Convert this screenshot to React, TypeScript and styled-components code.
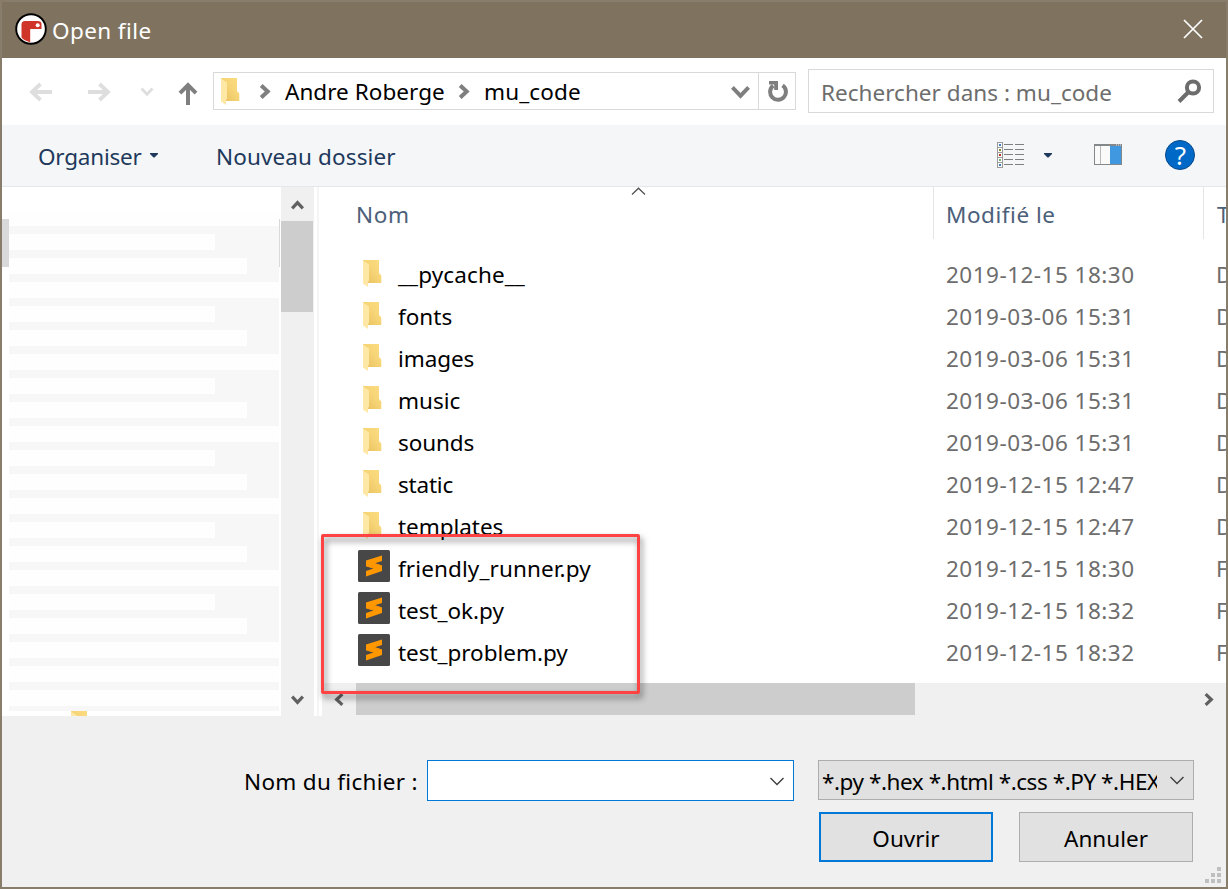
import React from 'react';
import styled, { createGlobalStyle } from 'styled-components';

const GlobalStyle = createGlobalStyle`
  * { box-sizing: border-box; }
  body { margin: 0; }
  svg { display: block; flex: none; }
`;

const Dialog = styled.main`
  position: relative;
  display: flex;
  flex-direction: column;
  width: 1228px;
  height: 889px;
  overflow: hidden;
  border: 2px solid #887d6a;
  background: #ffffff;
  color: #000000;
  font-family: 'Noto Sans', sans-serif;
  font-size: 22.5px;
  line-height: 30px;
  white-space: nowrap;
`;

const Text = styled.span<{ $spacing?: number }>`
  padding-top: 2px;
  letter-spacing: ${(p) => p.$spacing ?? 0}px;
`;

/* Title bar */
const TitleBar = styled.header`
  display: flex;
  align-items: center;
  flex: none;
  height: 56px;
  padding: 0 23px 2px 13px;
  background: #7f735f;
  color: #ffffff;
`;
const Title = styled.h1`
  flex: 1;
  margin: 0 0 0 5px;
  padding-top: 4px;
  font-size: inherit;
  font-weight: 400;
  letter-spacing: 0.4px;
`;
const CloseButton = styled.button`
  padding: 0;
  border: 0;
  background: none;
`;

/* Navigation row */
const NavBar = styled.nav`
  display: flex;
  align-items: center;
  flex: none;
  height: 67px;
  padding: 0 12px 1px 27px;
`;
const History = styled.div`
  display: flex;
  align-items: center;
  width: 184px;
  height: 28px;
  padding-top: 1px;
`;
const AddressBar = styled.div`
  display: flex;
  width: 583px;
  height: 38px;
  margin-right: 12px;
  border: 1px solid #d9d9d9;
`;
const Crumbs = styled.div`
  display: flex;
  align-items: center;
  flex: 1;
  padding: 0 8px 0 7px;
`;
const Crumb = styled(Text)<{ $width: number }>`
  width: ${(p) => p.$width}px;
  margin-left: 13px;
`;
const Refresh = styled.div`
  display: flex;
  align-items: center;
  justify-content: center;
  width: 37px;
  padding-left: 1px;
  border-left: 1px solid #d9d9d9;
`;
const SearchBox = styled.div`
  display: flex;
  align-items: center;
  justify-content: space-between;
  width: 406px;
  height: 44px;
  padding: 1px 11px 0 12px;
  border: 1px solid #d9d9d9;
  color: #6d6d6d;
`;

/* Command bar */
const CommandBar = styled.div`
  display: flex;
  align-items: center;
  flex: none;
  height: 62px;
  padding: 0 31px 0 36px;
  border-bottom: 1px solid #e5e7e9;
  background: #f4f6f8;
  color: #1e395b;
`;
const Command = styled.div<{ $width: number }>`
  display: flex;
  align-items: center;
  gap: 8px;
  width: ${(p) => p.$width}px;
`;
const ViewTools = styled.div`
  display: flex;
  align-items: center;
  margin-left: auto;
  padding-bottom: 1px;
`;
const ToolSlot = styled.div<{ $gap: number }>`
  margin-right: ${(p) => p.$gap}px;
`;

/* Body */
const Body = styled.div`
  display: flex;
  flex: none;
  height: 529px;
`;
const Sidebar = styled.aside`
  display: flex;
  width: 279px;
  overflow: hidden;
`;
const SelectionEdge = styled.div<{ $width: number }>`
  flex: none;
  width: ${(p) => p.$width}px;
  height: 48px;
  margin-top: 32px;
  background: #d9d9d9;
`;
const Places = styled.div`
  flex: none;
  width: 270px;
  height: 529px;
  padding-top: 23px;
  overflow: hidden;
`;
const PlacesTop = styled.div`
  height: 16px;
  background: #fefefe;
`;
const PlaceRow = styled.div`
  height: 24px;
  padding-top: 8px;
  background: #f7f7f7;
`;
const PlaceBar = styled.div<{ $width: number }>`
  width: ${(p) => p.$width}px;
  height: 16px;
  background: #fefefe;
`;
const PlacesEnd = styled.div`
  height: 5px;
  background: #f7f7f7;
`;
const PlaceFolder = styled.div`
  height: 5px;
  margin-left: 62px;
  overflow: hidden;
`;
const VScroll = styled.div`
  display: flex;
  flex-direction: column;
  align-items: center;
  width: 33px;
  background: #f0f0f0;
`;
const VThumb = styled.div`
  align-self: flex-start;
  width: 32px;
  height: 91px;
  background: #cdcdcd;
`;
const ScrollArrow = styled.div<{ $w: number; $h: number; $drop?: number }>`
  display: flex;
  align-items: center;
  justify-content: center;
  flex: none;
  width: ${(p) => p.$w}px;
  height: ${(p) => p.$h}px;
  padding-top: ${(p) => p.$drop ?? 0}px;
`;
const Spacer = styled.div`
  flex: 1;
`;
const Splitter = styled.div`
  width: 8px;
  border-left: 3px solid #ffffff;
  border-right: 3px solid #ffffff;
  background: #f5f5f5;
`;
const FilePane = styled.section`
  display: flex;
  flex-direction: column;
  flex: 1;
  min-width: 0;
  overflow: hidden;
`;
const HeaderRow = styled.div`
  display: flex;
  height: 52px;
  margin-bottom: 14px;
  color: #4c607a;
`;
const HeaderCell = styled.div<{ $width: number; $pad: number; $line?: boolean }>`
  position: relative;
  flex: none;
  width: ${(p) => p.$width}px;
  padding: 13px 0 0 ${(p) => p.$pad}px;
  border-left: ${(p) => (p.$line ? '1px solid #e5e5e5' : '0')};
`;
const SortMark = styled.div`
  position: absolute;
  top: 0;
  left: 309px;
`;
const FileRow = styled.div`
  display: flex;
  align-items: center;
  flex: none;
  height: 42px;
`;
const IconCell = styled.div`
  display: flex;
  flex: none;
  width: 76px;
  padding: 0 0 4px 36px;
`;
const FolderPad = styled.div`
  padding: 2px 0 0 5px;
`;
const NameCell = styled(Text)`
  flex: none;
  width: 548px;
`;
const DateCell = styled(Text)`
  flex: none;
  width: 270px;
  color: #6d6d6d;
`;
const KindCell = styled(Text)`
  flex: none;
  width: 20px;
  color: #6d6d6d;
`;
const HScroll = styled.div`
  display: flex;
  height: 33px;
  margin-top: auto;
  background: #f0f0f0;
`;
const HThumb = styled.div`
  width: 559px;
  height: 32px;
  background: #cdcdcd;
`;

/* Footer */
const Footer = styled.footer`
  display: flex;
  flex-direction: column;
  flex: 1;
  gap: 11px;
  padding: 44px 32px 0 0;
  background: #f0f0f0;
`;
const FieldRow = styled.div`
  display: flex;
  align-items: flex-start;
  justify-content: flex-end;
  height: 41px;
`;
const FieldLabel = styled.label`
  padding-top: 7px;
  width: 183px;
  letter-spacing: 0.3px;
`;
const FileNameBox = styled.div`
  display: flex;
  align-items: center;
  justify-content: flex-end;
  width: 367px;
  height: 41px;
  margin-right: 24px;
  padding: 0 9px 0 0;
  border: 1px solid #0078d7;
  background: #ffffff;
`;
const FilterBox = styled.div`
  display: flex;
  align-items: center;
  justify-content: space-between;
  width: 376px;
  height: 40px;
  padding: 0 9px 0 3px;
  border: 1px solid #adadad;
  background: #e1e1e1;
`;
const FilterText = styled.div`
  width: 335px;
  padding-top: 4px;
  overflow: hidden;
  letter-spacing: -0.44px;
`;
const ButtonRow = styled.div`
  display: flex;
  justify-content: flex-end;
  gap: 26px;
  padding-right: 1px;
`;
const Button = styled.button<{ $primary?: boolean }>`
  width: 174px;
  height: 50px;
  padding: 4px 0 0;
  border: ${(p) => (p.$primary ? '2px solid #0078d7' : '1px solid #adadad')};
  background: #e1e1e1;
  color: #000000;
  font: inherit;
`;
const Grip = styled.div`
  position: absolute;
  right: 5px;
  bottom: 4px;
`;
const Highlight = styled.div`
  position: absolute;
  left: 319px;
  top: 532px;
  width: 319px;
  height: 160px;
  border: 3px solid #ff4343;
  border-radius: 2px;
  filter: drop-shadow(2px 4px 3px rgba(0, 0, 0, 0.5));
`;

const AppLogo = () => (
  <svg width="32" height="32" viewBox="0 0 32 32">
    <circle cx="16" cy="16" r="15" fill="#ffffff" />
    <path d="M6.500 11.500 Q6.500 8 10 8 H22.500 Q26.500 8 26.500 11 V16 H15.200 V29.200 Q9 27.500 6.500 24.500 Z" fill="#cf3528" />
    <circle cx="22.700" cy="12.300" r="2" fill="#ffffff" />
    <circle cx="16" cy="16" r="14.800" fill="none" stroke="#000000" strokeWidth="1.900" />
  </svg>
);

const Folder = () => (
  <svg width="19" height="27" viewBox="0 0 19 27">
    <defs>
      <linearGradient id="folderBack" x1="0" y1="1" x2="1" y2="0">
        <stop offset="0" stopColor="#e8bf5c" />
        <stop offset="0.600" stopColor="#f7d679" />
        <stop offset="1" stopColor="#fbdc80" />
      </linearGradient>
    </defs>
    <path d="M0 0 H16 V13 L18.300 15.500 V23 H5 Z" fill="url(#folderBack)" />
    <path d="M0 0.500 L6 4.500 V20.500 L5 22 V27 L0 23.500 Z" fill="#ffe8a6" />
  </svg>
);

const ScriptIcon = () => (
  <svg width="32" height="32" viewBox="0 0 32 32">
    <rect width="32" height="32" rx="1.500" fill="#474747" />
    <path d="M8 10.500 L24 5.500 V11 L17 13.300 L24 15.600 V21 L8 26.500 V21 L15.500 18.500 L8 16.200 Z" fill="#ff9800" />
    <path d="M8 16.200 L15.500 18.500 L17.500 17.800 L11 15.500 Z M24 15.600 L17 13.300 L14.500 14 L20 16 Z" fill="#f89400" />
  </svg>
);

type Dir = 'up' | 'down' | 'left' | 'right';
const turn: Record<Dir, number> = { down: 0, left: 90, up: 180, right: 270 };

const Chevron = ({ dir, size, stroke, color }: { dir: Dir; size: number; stroke: number; color: string }) => (
  <svg width={size} height={size} viewBox={`0 0 ${size} ${size}`}>
    <path
      d={`M${stroke / 2.8} ${size * 0.28} L${size / 2} ${size * 0.78 - stroke / 4} L${size - stroke / 2.8} ${size * 0.28}`}
      fill="none"
      stroke={color}
      strokeWidth={stroke}
      transform={`rotate(${turn[dir]} ${size / 2} ${size / 2})`}
    />
  </svg>
);

const HistoryIcons = () => (
  <svg width="184" height="28" viewBox="29 78 184 28" fill="none">
    <path d="M52 92 H32 M40.500 84 L32 92 L40.500 100" stroke="#dedede" strokeWidth="3.800" />
    <path d="M88 92 H108 M99.500 84 L108 92 L99.500 100" stroke="#dedede" strokeWidth="3.800" />
    <path d="M141.500 88.500 L147 94.200 L152.500 88.500" stroke="#dedede" strokeWidth="2.800" />
    <path d="M188 105 V85 M180 93.200 L188 85 L196 93.200" stroke="#7f7f7f" strokeWidth="4" />
  </svg>
);

const RefreshIcon = () => (
  <svg width="20" height="23" viewBox="0 0 20 23">
    <path d="M5.200 5.600 A7.900 7.900 0 1 0 14.600 5.400" fill="none" stroke="#7f7f7f" strokeWidth="4" />
    <path d="M1 1 H10 V10 H6.200 V4.500 H1 Z" fill="#7f7f7f" />
  </svg>
);

const SearchIcon = () => (
  <svg width="25" height="25" viewBox="0 0 25 25" fill="none" stroke="#6d6d6d">
    <circle cx="16" cy="8.500" r="6.100" strokeWidth="4" />
    <path d="M11.500 13 L2 22.500" strokeWidth="4" />
  </svg>
);

const SmallTriangle = () => (
  <svg width="8" height="5" viewBox="0 0 8 5">
    <path d="M0 0 H8 V1 L4.500 4.500 H3.500 L0 1 Z" fill="#1e395b" />
  </svg>
);

const chips = ['#3a7fc4', '#7d8f2f', '#b8321f', '#7fae7a', '#3a7fc4'];
const ViewIcon = () => (
  <svg width="28" height="26" viewBox="0 0 28 26">
    {chips.map((c, i) => (
      <g key={i}>
        <rect x="0.500" y={0.5 + i * 5} width="5" height="5" fill="#ffffff" stroke="#9b9b9b" />
        <rect x="2" y={2 + i * 5} width="2" height="2" fill={c} />
        <path d={`M7 ${2.5 + i * 5} H16 M18 ${2.5 + i * 5} H27`} stroke="#808080" />
      </g>
    ))}
  </svg>
);

const PreviewIcon = () => (
  <svg width="28" height="22" viewBox="0 0 28 22">
    <rect x="0.500" y="0.500" width="27" height="20" fill="#fafafa" stroke="#85888b" />
    <rect x="0" y="0" width="28" height="2" fill="#85888b" />
    <path d="M6.500 2 V20" stroke="#b9b9b9" />
    <rect x="16" y="2" width="11.500" height="18" fill="#3f98e0" />
    <path d="M22 1 H23 M24 1 H25 M26 1 H27" stroke="#e8e8e8" />
    <path d="M27.500 2 V20" stroke="#85888b" />
  </svg>
);

const HelpBadge = styled.div`
  display: flex;
  align-items: center;
  justify-content: center;
  width: 30px;
  height: 30px;
  padding-left: 1px;
  border: 1px solid #0b4a8a;
  border-radius: 50%;
  background: #0069c8;
  color: #ffffff;
  font-size: 26px;
  line-height: 28px;
`;

const placeWidths = [206, 238, 270];
const places = Array.from({ length: 20 }, (_, i) => (i > 17 ? 270 : placeWidths[i % 3]));

interface Entry {
  name: string;
  date: string;
  kind: 'D' | 'F';
  spacing: number;
}
const entries: Entry[] = [
  { name: '__pycache__', date: '2019-12-15 18:30', kind: 'D', spacing: 0.12 },
  { name: 'fonts', date: '2019-03-06 15:31', kind: 'D', spacing: 0 },
  { name: 'images', date: '2019-03-06 15:31', kind: 'D', spacing: -0.1 },
  { name: 'music', date: '2019-03-06 15:31', kind: 'D', spacing: 0 },
  { name: 'sounds', date: '2019-03-06 15:31', kind: 'D', spacing: -0.1 },
  { name: 'static', date: '2019-12-15 12:47', kind: 'D', spacing: -0.2 },
  { name: 'templates', date: '2019-12-15 12:47', kind: 'D', spacing: -0.05 },
  { name: 'friendly_runner.py', date: '2019-12-15 18:30', kind: 'F', spacing: 0.11 },
  { name: 'test_ok.py', date: '2019-12-15 18:32', kind: 'F', spacing: -0.04 },
  { name: 'test_problem.py', date: '2019-12-15 18:32', kind: 'F', spacing: -0.04 },
];

export default function App() {
  return (
    <Dialog>
      <GlobalStyle />
      <TitleBar>
        <AppLogo />
        <Title>Open file</Title>
        <CloseButton aria-label="Close">
          <svg width="20" height="20" viewBox="0 0 20 20">
            <path d="M1 1 L19 19 M19 1 L1 19" stroke="#ffffff" strokeWidth="1.700" />
          </svg>
        </CloseButton>
      </TitleBar>

      <NavBar>
        <History>
          <HistoryIcons />
        </History>
        <AddressBar>
          <Crumbs>
            <Folder />
            <Spacer />
            <Chevron dir="right" size={15} stroke={4} color="#7f7f7f" />
            <Crumb $spacing={0.04} $width={171}>Andre Roberge</Crumb>
            <Chevron dir="right" size={15} stroke={4} color="#7f7f7f" />
            <Crumb $spacing={0.14} $width={247}>mu_code</Crumb>
            <Chevron dir="down" size={19} stroke={4} color="#7f7f7f" />
          </Crumbs>
          <Refresh>
            <RefreshIcon />
          </Refresh>
        </AddressBar>
        <SearchBox>
          <Text $spacing={0.03}>Rechercher dans : mu_code</Text>
          <SearchIcon />
        </SearchBox>
      </NavBar>

      <CommandBar>
        <Command $width={178}>
          <Text $spacing={-0.22}>Organiser</Text>
          <SmallTriangle />
        </Command>
        <Command $width={200}>
          <Text $spacing={0.12}>Nouveau dossier</Text>
        </Command>
        <ViewTools>
          <ToolSlot $gap={19}><ViewIcon /></ToolSlot>
          <ToolSlot $gap={42}><SmallTriangle /></ToolSlot>
          <ToolSlot $gap={43}><PreviewIcon /></ToolSlot>
          <HelpBadge>?</HelpBadge>
        </ViewTools>
      </CommandBar>

      <Body>
        <Sidebar>
          <SelectionEdge $width={7} />
          <Places>
            <PlacesTop />
            {places.map((w, i) => (
              <PlaceRow key={i}>
                <PlaceBar $width={w} />
              </PlaceRow>
            ))}
            <PlacesEnd />
            <PlaceFolder>
              <Folder />
            </PlaceFolder>
          </Places>
          <SelectionEdge $width={1} />
        </Sidebar>
        <VScroll>
          <ScrollArrow $w={33} $h={34} $drop={3}>
            <Chevron dir="up" size={13} stroke={3.2} color="#606060" />
          </ScrollArrow>
          <VThumb />
          <Spacer />
          <ScrollArrow $w={33} $h={34}>
            <Chevron dir="down" size={13} stroke={3.2} color="#606060" />
          </ScrollArrow>
        </VScroll>
        <Splitter />
        <FilePane>
          <HeaderRow>
            <HeaderCell $width={611} $pad={34}>
              <Text $spacing={0.6}>Nom</Text>
              <SortMark>
                <svg width="15" height="9" viewBox="0 0 15 9">
                  <path d="M1 7.500 L7.500 1.200 L14 7.500" fill="none" stroke="#505050" strokeWidth="1.200" />
                </svg>
              </SortMark>
            </HeaderCell>
            <HeaderCell $width={270} $pad={12} $line>
              <Text $spacing={0.53}>Modifié le</Text>
            </HeaderCell>
            <HeaderCell $width={23} $pad={13} $line>
              T
            </HeaderCell>
          </HeaderRow>
          {entries.map((e) => (
            <FileRow key={e.name}>
              <IconCell>
                {e.kind === 'D' ? (
                  <FolderPad>
                    <Folder />
                  </FolderPad>
                ) : (
                  <ScriptIcon />
                )}
              </IconCell>
              <NameCell $spacing={e.spacing}>{e.name}</NameCell>
              <DateCell $spacing={0.48}>{e.date}</DateCell>
              <KindCell>{e.kind}</KindCell>
            </FileRow>
          ))}
          <HScroll>
            <ScrollArrow $w={34} $h={33}>
              <Chevron dir="left" size={13} stroke={3.2} color="#606060" />
            </ScrollArrow>
            <HThumb />
            <Spacer />
            <ScrollArrow $w={36} $h={33}>
              <Chevron dir="right" size={13} stroke={3.2} color="#606060" />
            </ScrollArrow>
          </HScroll>
        </FilePane>
      </Body>

      <Footer>
        <FieldRow>
          <FieldLabel>Nom du fichier :</FieldLabel>
          <FileNameBox>
            <Chevron dir="down" size={14} stroke={1.4} color="#404040" />
          </FileNameBox>
          <FilterBox>
            <FilterText>*.py *.hex *.html *.css *.PY *.HEX</FilterText>
            <Chevron dir="down" size={14} stroke={1.4} color="#404040" />
          </FilterBox>
        </FieldRow>
        <ButtonRow>
          <Button $primary>Ouvrir</Button>
          <Button>Annuler</Button>
        </ButtonRow>
      </Footer>

      <Grip>
        <svg width="16" height="16" viewBox="0 0 16 16" fill="#bfbfbf">
          <path d="M12 0h4v4h-4z M6 6h4v4h-4z M12 6h4v4h-4z M0 12h4v4h-4z M6 12h4v4h-4z M12 12h4v4h-4z" />
        </svg>
      </Grip>
      <Highlight />
    </Dialog>
  );
}
